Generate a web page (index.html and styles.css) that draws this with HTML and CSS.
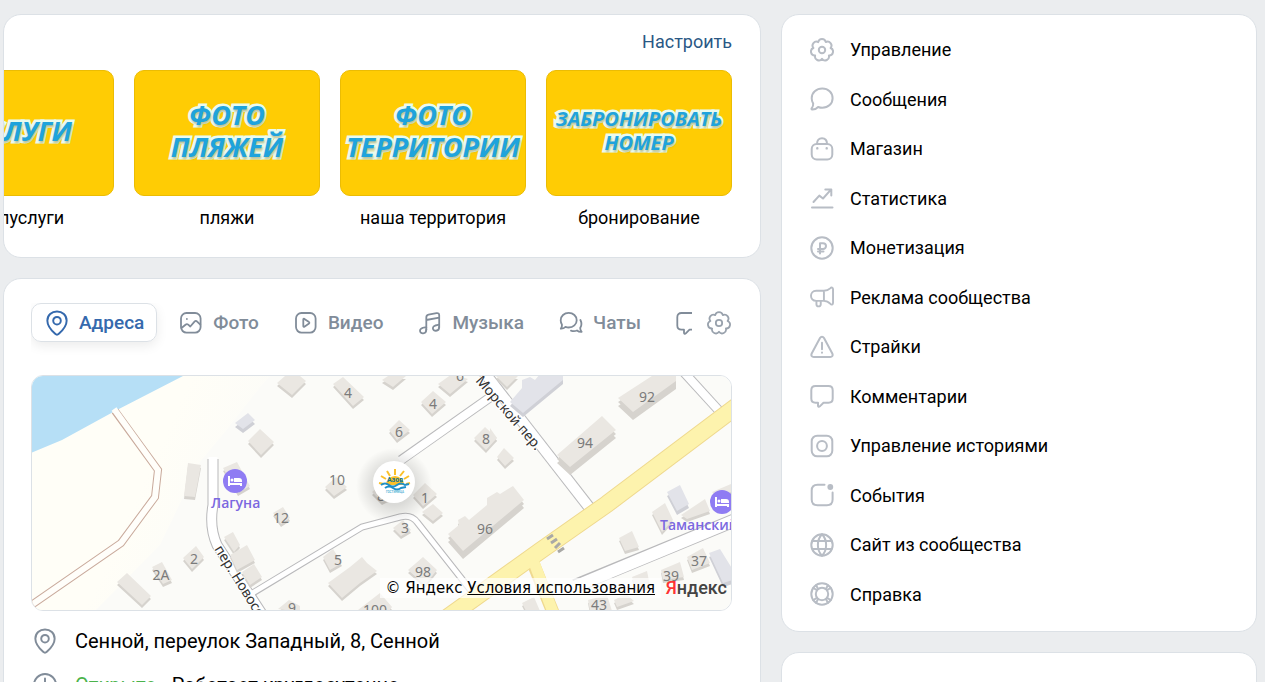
FILE: index.html
```html
<!DOCTYPE html>
<html lang="ru">
<head>
  <meta charset="UTF-8" />
  <title>Сообщество</title>
  <link rel="stylesheet" href="styles.css">
</head>
<body>

<!-- icons -->
<svg class="sprite" aria-hidden="true">
  <symbol id="gear" viewBox="0 0 24 24"><path d="M15.8 4.1A3.9 3.9 0 0 1 20.6 10A3.9 3.9 0 0 1 18.9 17.5A3.9 3.9 0 0 1 12 20.8A3.9 3.9 0 0 1 5.1 17.5A3.9 3.9 0 0 1 3.4 10A3.9 3.9 0 0 1 8.2 4.1A3.9 3.9 0 0 1 15.8 4.1Z"/><circle cx="12" cy="12" r="3.2"/></symbol>
  <symbol id="message" viewBox="0 0 24 24"><path d="M12.3 1.6C18.2 1.6 22.6 5.7 22.6 11.2S18.2 20.8 12.3 20.8C10.8 20.8 9.4 20.5 8.1 20C6.5 21.8 4 22.6 2 22.5C1.4 22.4 1.3 21.7 1.7 21.3C2.8 20 3.3 18.3 3.2 16.6C2.2 15 1.7 13.2 1.7 11.2C1.7 5.7 6.4 1.6 12.3 1.6Z"/></symbol>
  <symbol id="shop" viewBox="0 0 24 24"><rect x="1.7" y="7" width="20.6" height="15.5" rx="5"/><path d="M7 7C7 3 9 1.3 12 1.3S17 3 17 7"/><path d="M7.3 11.3v.1M16.7 11.3v.1" stroke-width="2.4"/></symbol>
  <symbol id="stats" viewBox="0 0 24 24"><path d="M2 21.5H22.5M3.5 16L9.3 9.6L13 12.5L20.5 4.2M15.3 3.5H21.3V9.5"/></symbol>
  <symbol id="ruble" viewBox="0 0 24 24"><circle cx="12" cy="12" r="10.7"/><path d="M10 17.5V7.2H13C17 7.2 17 13 13 13H8M8 15.5H13.5"/></symbol>
  <symbol id="ads" viewBox="0 0 25 24"><path d="M14.5 5.5H6.5C-.8 5.5-.8 16 6.5 16H14.5ZM14.5 5.5C17.5 5.5 19.5 4.5 21 3C22.5 1.4 24 2.2 24 4V18C24 20 22.5 20.7 21 19C19.5 17.3 17.5 16 14.5 16M6.7 16V19.5C6.7 22.5 11.2 22.5 11.2 19.5V16"/></symbol>
  <symbol id="warn" viewBox="0 0 24 24"><path d="M10 3C11 1.4 13 1.4 14 3L22.3 18.5C23.2 20.5 22.2 22 20.2 22H3.8C1.8 22 .8 20.5 1.7 18.5ZM12 7.8V14.3M12 17.6V17.7"/></symbol>
  <symbol id="comment" viewBox="0 0 24 24"><path d="M5.5 2H18.5C21.2 2 22.7 3.5 22.7 6.2V14.5C22.7 17.3 21.2 18.7 18.5 18.7H13.5L9.8 22.4C9 23.2 8 22.9 8 21.8V18.7H5.5C2.8 18.7 1.3 17.3 1.3 14.5V6.2C1.3 3.5 2.8 2 5.5 2Z"/></symbol>
  <symbol id="story" viewBox="0 0 24 24"><rect x="1.7" y="1.7" width="20.6" height="20.6" rx="5.5"/><circle cx="12" cy="12" r="4.9"/></symbol>
  <symbol id="event" viewBox="0 0 24 24"><path d="M14.5 1.7H7.5C3.5 1.7 1.7 3.5 1.7 7.5V16.5C1.7 20.5 3.5 22.3 7.5 22.3H16.8C20.8 22.3 22.6 20.5 22.6 16.5V9.5"/><circle cx="20.3" cy="4" r="2.9" fill="currentColor" stroke="none"/></symbol>
  <symbol id="globe" viewBox="0 0 24 24"><circle cx="12" cy="12" r="10.7"/><path d="M12 1.3C6.5 7 6.5 17 12 22.7M12 1.3C17.5 7 17.5 17 12 22.7M2.5 8H21.5M2.5 16H21.5"/></symbol>
  <symbol id="help" viewBox="0 0 24 24"><circle cx="12" cy="12" r="10.7"/><circle cx="12" cy="12" r="6.2"/><path d="M3.300 6L7 8.200M6 3.300L8.200 7M20.700 6L17 8.200M18 3.300L15.800 7M3.300 18L7 15.800M6 20.700L8.200 17M20.700 18L17 15.800M18 20.700L15.800 17"/></symbol>
  <symbol id="pin" viewBox="0 0 24 24"><path d="M12 1.3C17 1.3 20.9 5 20.9 9.9C20.9 14.5 17 19 13.7 22C12.7 22.9 11.3 22.9 10.3 22C7 19 3.1 14.5 3.1 9.9C3.1 5 7 1.3 12 1.3Z"/><circle cx="12" cy="9.9" r="3.5"/></symbol>
  <symbol id="photo" viewBox="0 0 24 24"><rect x="2" y="2" width="19.600" height="19.600" rx="5.500"/><path d="M2.500 17L6.500 13.700C7.500 12.900 8.300 12.900 9.200 13.700L11.300 15.500L15.500 10.700C16.400 9.700 17.300 9.700 18.200 10.700L21.300 13.700M7.900 7.900V8"/></symbol>
  <symbol id="video" viewBox="0 0 24 24"><rect x="2" y="2" width="19.600" height="19.600" rx="5.500"/><path d="M9.300 8.600C9.300 7.900 9.800 7.600 10.400 7.900L15 11.100C15.500 11.500 15.500 12.100 15 12.500L10.400 15.700C9.800 16.100 9.300 15.800 9.300 15.100Z"/></symbol>
  <symbol id="music" viewBox="0 0 24 24"><path d="M8.3 18.8V6.5C8.3 4.8 9 4 10.500 3.7L18.500 2.2C20.3 1.9 21.2 2.5 21.2 4.2V16.2M8.3 9L21.2 6.6"/><path d="M8.3 18.5C8.3 23.5 2 23.3 2 19.8C2 16.8 5 16.8 8.3 16.3M21.2 15.9C21.2 20.9 14.9 20.7 14.9 17.2C14.9 14.2 18 14.2 21.2 13.7"/></symbol>
  <symbol id="chats" viewBox="0 0 24 24"><path d="M9.700 1.900C14.200 1.900 17.700 5 17.700 9.200S14.200 16.500 9.700 16.500C8.500 16.500 7.500 16.300 6.500 15.900C5.300 17.100 3.500 17.800 1.800 17.700C2.700 16.500 3.100 15.200 3 13.700C2.100 12.400 1.700 10.900 1.700 9.200C1.700 5 5.200 1.900 9.700 1.900Z"/><path d="M21.400 9C22.700 11.500 22.600 14.700 21.200 17C21.200 18.500 21.700 19.700 22.600 20.900C20.900 21 19.200 20.500 18 19.500C16 20.400 13.500 20.200 12 19.600"/></symbol>
  <symbol id="clock" viewBox="0 0 24 24"><circle cx="12" cy="12" r="10.2"/><path d="M12 6V12.500L16 15"/></symbol>
</svg>

<div class="page">
  <main class="column">
    <section class="card menu">
      <div class="menu-head"><a href="#">Настроить</a></div>
      <div class="tiles">
        <a href="#" class="tile"><span class="cover">УСЛУГИ</span>допуслуги</a>
        <a href="#" class="tile"><span class="cover">ФОТО<br>ПЛЯЖЕЙ</span>пляжи</a>
        <a href="#" class="tile"><span class="cover">ФОТО<br>ТЕРРИТОРИИ</span>наша территория</a>
        <a href="#" class="tile"><span class="cover small">ЗАБРОНИРОВАТЬ<br>НОМЕР</span>бронирование</a>
      </div>
    </section>

    <section class="card content">
      <div class="tabs">
        <div class="tab-list">
          <button class="tab active"><svg class="icon"><use href="#pin"/></svg>Адреса</button>
          <button class="tab"><svg class="icon"><use href="#photo"/></svg>Фото</button>
          <button class="tab"><svg class="icon"><use href="#video"/></svg>Видео</button>
          <button class="tab"><svg class="icon"><use href="#music"/></svg>Музыка</button>
          <button class="tab"><svg class="icon"><use href="#chats"/></svg>Чаты</button>
          <button class="tab" aria-label="Обсуждения"><svg class="icon"><use href="#comment"/></svg></button>
        </div>
        <button class="settings" aria-label="Настройки"><svg class="icon"><use href="#gear"/></svg></button>
      </div>

      <div class="map">
        <svg class="map-view" viewBox="32 376 699 234" preserveAspectRatio="xMidYMid slice">
          <defs>
            <g id="houses">
              <path d="M277 383L285 376H300L306 381L292 395ZM333 384L343 377L364 397L353 406ZM382 380L388 376H406L393 387ZM438 384L452 374L468 379L450 394ZM421 402L433 391L446 402L432 414ZM389 430L399 420L410 430L397 440ZM474 438L485 427L497 438L486 450ZM248 441L260 429L274 442L261 455ZM188 463L201 465L195 497L184 496ZM223 468L237 462L250 486L238 493Z"/>
              <path d="M117 582L127 573L151 596L142 605ZM152 567L162 562L172 580L163 584ZM183 558L196 546L204 557L192 569ZM224 537L233 532L240 545L234 552ZM230 555L247 545L255 560L237 570ZM242 572L254 564L262 577L250 585ZM325 487L336 477L347 487L334 496ZM273 513L283 507L290 518L281 524ZM323 557L333 549L342 563L330 570ZM328 583L350 567L362 557L367 563L377 571L360 583L342 598Z"/>
              <path d="M393 528L403 520L411 530L401 536ZM408 570L423 557L437 570L425 585ZM358 610L380 593L392 607L388 612ZM278 609L289 600L300 606V612ZM372 492L380 485L390 498L382 502ZM413 495L425 483L437 494L423 506ZM422 512L433 504L443 513L433 521ZM497 457L504 448L514 458L505 466ZM495 375L518 376L507 387ZM490 428L497 438L490 443Z"/>
              <path d="M652 512L665 503L673 520L662 532ZM681 515L705 499L710 511L687 519ZM619 538L632 531L639 547L625 551ZM687 557L703 548L710 563L692 570ZM661 570L680 562L684 577L663 580ZM632 577L647 571L650 586L636 590ZM588 600L607 595L612 611H590ZM522 603L534 597L540 611H526ZM614 600L626 594L634 601L617 607ZM712 492L731 484V492L718 498Z"/>
            </g>
            <g id="blocks">
              <path d="M448 534L459 525L458 520L465 516L469 520L487 505V498L497 492L500 494L513 486L524 500L463 551ZM618 398L655 374H676V381L633 412ZM557 455L602 416L616 430L570 467Z"/>
            </g>
            <g id="offices">
              <path d="M235 423L248 413L255 420L243 429ZM510 402L522 388V380L530 377L535 380L540 374H563V380L523 413ZM667 492L680 485L689 504L677 511ZM709 553L720 549L733 570V580L723 583Z"/>
            </g>
            <g id="bed">
              <circle r="12" fill="#8f7cf3"/>
              <path d="M-7-5H-5V2H7V5H5V4H-5V5H-7ZM-1-3H4Q7-3 7 0V1H-1Z" fill="#fff"/><circle cx="-3" cy="-1" r="1.5" fill="#fff"/>
            </g>
            <radialGradient id="shade"><stop offset=".5" stop-opacity=".13"/><stop offset="1" stop-opacity="0"/></radialGradient>
            <linearGradient id="beach" x1="0" y1="0" x2="1" y2=".4"><stop offset=".6" stop-color="#fffef7"/><stop offset="1" stop-color="#fbfbf8"/></linearGradient>
          </defs>

          <rect x="0" y="360" width="760" height="270" fill="#fbfbf8"/>
          <path d="M0 360H285L262 385L225 432L200 462L160 545L95 611H0Z" fill="url(#beach)"/>
          <path d="M0 376H183L115 411L62 440L31 453L0 462Z" fill="#b6dff6"/>

          <!-- roads -->
          <g class="road sand"><path d="M115 411L158 470L155 497L121 543L20 613"/></g>
          <g class="road-fill sand"><path d="M114 409L158 470L155 497L121 543L20 613"/></g>
          <g class="road">
            <path d="M213 459L213 505Q209 527 217 545L266 620" stroke-width="11"/>
            <path d="M248 596L362 527L400 517Q411 514 417 522L480 602" stroke-width="7"/>
            <path d="M401 460L492 396" stroke-width="10"/>
            <path d="M480 367L592 511" stroke-width="12"/>
            <path d="M680 368L722 414" stroke-width="10"/>
            <path d="M575 586L740 518" stroke-width="14"/>
          </g>
          <g class="road-fill">
            <path d="M213 457L213 505Q209 527 217 545L266 620" stroke-width="9"/>
            <path d="M246 597L362 527L400 517Q411 514 417 522L480 602" stroke-width="5"/>
            <path d="M400 461L492 396" stroke-width="8"/>
            <path d="M480 367L592 511" stroke-width="10"/>
            <path d="M680 368L722 414" stroke-width="8"/>
            <path d="M574 587L740 518" stroke-width="12"/>
          </g>
          <g fill="none" stroke="#efd98f"><path d="M745 400L607 504L540 551L430 630" stroke-width="18"/><path d="M533 563L556 620" stroke-width="13"/></g>
          <g fill="none" stroke="#fdf3ad"><path d="M745 400L607 504L540 551L430 630" stroke-width="16"/><path d="M533 560L556 620" stroke-width="11"/></g>
          <path d="M547 539L553 535M551 543L557 539M555 548L560 543M558 552L564 548" stroke="#a9a9a6" stroke-width="3"/>

          <use href="#houses" y="3" fill="#d6d3ce"/>
          <use href="#houses" fill="#eae7e2"/>
          <use href="#blocks" y="8" fill="#d6d3ce"/>
          <use href="#blocks" y="4" fill="#d6d3ce"/>
          <use href="#blocks" fill="#eae7e2"/>
          <use href="#offices" y="4" fill="#cfd0d6"/>
          <use href="#offices" fill="#e2e3e9"/>

          <g class="numbers">
            <text x="348" y="398">4</text><text x="433" y="409">4</text><text x="399" y="437">6</text><text x="460" y="381">6</text>
            <text x="486" y="444">8</text><text x="337" y="485">10</text><text x="281" y="523">12</text><text x="381" y="501">8</text>
            <text x="425" y="503">1</text><text x="405" y="533">3</text><text x="338" y="565">5</text><text x="485" y="534">96</text>
            <text x="423" y="577">98</text><text x="375" y="615">100</text><text x="292" y="613">9</text><text x="194" y="564">2</text>
            <text x="161" y="580">2А</text><text x="647" y="402">92</text><text x="585" y="448">94</text><text x="699" y="566">37</text>
            <text x="671" y="581">39</text><text x="599" y="610">43</text>
          </g>
          <g class="streets">
            <text transform="translate(475 381) rotate(49)">Морской пер.</text>
            <text transform="translate(214 549) rotate(58)">пер. Новоселов</text>
          </g>
          <g class="hotels">
            <use href="#bed" x="235" y="481"/><text x="211" y="508">Лагуна</text>
            <use href="#bed" x="722" y="502"/><text x="660" y="530">Таманский</text>
          </g>

          <!-- marker of the community -->
          <circle cx="394" cy="486" r="38" fill="url(#shade)"/>
          <circle cx="394" cy="482" r="21" fill="#fff"/>
          <path d="M395 475V469M390 476L387 471M400 476L404 471M386 479L381 476M404 479L409 476M384 484L379 483M406 484L410 483" stroke="#fbc02a" stroke-width="2"/>
          <path d="M386 485A9 9 0 0 1 404 485Z" fill="#fbc02a"/>
          <path d="M381 485Q385 482 389 485T397 485T405 485L409 484M385 488Q389 485 393 488T401 488L406 487" fill="none" stroke="#1d8fc9" stroke-width="2"/>
          <text class="brand" x="395" y="482">Азов</text>
          <text class="brand sub" x="395" y="493">ГОСТИНИЦА</text>
        </svg>
        <div class="map-copy">© Яндекс <a href="#">Условия использования</a></div>
        <a href="#" class="map-logo"><span>Я</span>ндекс</a>
      </div>

      <div class="info"><svg class="icon"><use href="#pin"/></svg>Сенной, переулок Западный, 8, Сенной</div>
      <div class="info"><svg class="icon"><use href="#clock"/></svg><div><span class="open">Открыто</span> · Работает круглосуточно</div></div>
    </section>
  </main>

  <aside class="column">
    <nav class="card">
      <ul class="nav">
        <li><a href="#"><svg class="icon"><use href="#gear"/></svg>Управление</a></li>
        <li><a href="#"><svg class="icon"><use href="#message"/></svg>Сообщения</a></li>
        <li><a href="#"><svg class="icon"><use href="#shop"/></svg>Магазин</a></li>
        <li><a href="#"><svg class="icon"><use href="#stats"/></svg>Статистика</a></li>
        <li><a href="#"><svg class="icon"><use href="#ruble"/></svg>Монетизация</a></li>
        <li><a href="#"><svg class="icon"><use href="#ads"/></svg>Реклама сообщества</a></li>
        <li><a href="#"><svg class="icon"><use href="#warn"/></svg>Страйки</a></li>
        <li><a href="#"><svg class="icon"><use href="#comment"/></svg>Комментарии</a></li>
        <li><a href="#"><svg class="icon"><use href="#story"/></svg>Управление историями</a></li>
        <li><a href="#"><svg class="icon"><use href="#event"/></svg>События</a></li>
        <li><a href="#"><svg class="icon"><use href="#globe"/></svg>Сайт из сообщества</a></li>
        <li><a href="#"><svg class="icon"><use href="#help"/></svg>Справка</a></li>
      </ul>
    </nav>
    <section class="card next"></section>
  </aside>
</div>

</body>
</html>
```
FILE: styles.css
```css
* {
    box-sizing: border-box;
}

body {
    margin: 0;
    height: 100vh;
    overflow: hidden;
    background-color: #ebedef;
    font-family: Roboto, "Liberation Sans", sans-serif;
    font-size: 18px;
    color: #000;
}

a {
    color: inherit;
    text-decoration: none;
}

button {
    font: inherit;
    border: none;
    background: none;
    padding: 0;
    cursor: pointer;
}

.sprite {
    display: none;
}

.icon {
    flex: none;
    width: 26px;
    height: 26px;
    fill: none;
    stroke: currentColor;
    stroke-width: 1.8;
    stroke-linecap: round;
    stroke-linejoin: round;
    overflow: visible;
}

.page {
    display: grid;
    grid-template-columns: minmax(0, 758fr) minmax(0, 476fr);
    align-items: start;
    gap: 20px;
    padding: 14px 8px 0 3px;
}

.column {
    display: flex;
    flex-direction: column;
    gap: 20px;
}

.card {
    background-color: #fff;
    border: 1px solid #dce1e6;
    border-radius: 18px;
    overflow: hidden;
}

/* menu tiles */
.menu {
    padding: 16px 28px 27px;
}

.menu-head {
    line-height: 22px;
    margin-bottom: 17px;
    text-align: right;
    color: #2a5885;
}

.tiles {
    display: flex;
    justify-content: flex-end;
    gap: 20px;
}

.tile {
    flex: 0 0 186px;
    text-align: center;
    line-height: 24px;
}

.cover {
    display: flex;
    align-items: center;
    justify-content: center;
    height: 126px;
    margin-bottom: 10px;
    padding-bottom: 4px;
    border: 1px solid #ebbc04;
    border-radius: 10px;
    background-color: #ffcc04;
    font-family: "Open Sans", sans-serif;
    font-size: 27px;
    font-weight: 700;
    font-style: italic;
    line-height: 32px;
    color: #1fa3dc;
    -webkit-text-stroke: 5px #e9fbef;
    paint-order: stroke fill;
    text-shadow: 1px 2px 2px rgba(120, 110, 20, 0.4);
}

.cover.small {
    font-size: 20px;
    line-height: 24px;
}

/* tabs */
.content {
    padding: 24px 28px 24px 27px;
}

.tabs {
    display: flex;
    gap: 14px;
    margin-bottom: 8px;
}

.tab-list {
    display: flex;
    flex: 1;
    gap: 8px;
    min-width: 0;
    overflow: hidden;
    padding-bottom: 25px;
}

.tab {
    display: flex;
    align-items: center;
    flex: none;
    gap: 9px;
    height: 39px;
    padding: 0 12px;
    border: 1px solid transparent;
    border-radius: 10px;
    font-size: 19px;
    font-weight: 500;
    color: #818c99;
}

.tab .icon {
    width: 24px;
    height: 24px;
    margin: 0 1px;
}

.tab.active {
    border-color: #dce1e6;
    box-shadow: 0 4px 12px rgba(0, 0, 0, 0.08);
    color: #3569ad;
}

.tab.active .icon {
    width: 26px;
    height: 26px;
    margin: 0;
}

.settings {
    height: 39px;
    padding: 0 1px;
    color: #99a2ad;
}

.settings .icon {
    display: block;
    width: 24px;
    height: 24px;
}

/* map */
.map {
    position: relative;
    height: 236px;
    border: 1px solid #dce1e6;
    border-radius: 12px;
    overflow: hidden;
    margin-bottom: 8px;
}

.map-view {
    display: block;
    width: 100%;
    height: 100%;
}

.road {
    fill: none;
    stroke: #b9b9bb;
}

.road-fill {
    fill: none;
    stroke: #fff;
}

.road.sand {
    stroke: #c9aa9c;
    stroke-width: 8;
}

.road-fill.sand {
    stroke: #fffefa;
    stroke-width: 6;
}

.numbers {
    font: 14px "Noto Sans", sans-serif;
    text-anchor: middle;
    fill: #7b7b7b;
}

.streets {
    font: 14px "Noto Sans", sans-serif;
    fill: #333;
    stroke: #fff;
    stroke-width: 2;
    paint-order: stroke;
}

.hotels {
    font: 600 14px "Open Sans", sans-serif;
    fill: #7b68e0;
}

.brand {
    font: bold 7px Roboto, sans-serif;
    text-anchor: middle;
    fill: #12758f;
}

.brand.sub {
    font-size: 3px;
    fill: #5cb4d8;
}

.map-copy {
    position: absolute;
    right: 70px;
    bottom: 12px;
    padding: 0 6px;
    background-color: rgba(255, 255, 255, 0.7);
    font: 15px/20px "DejaVu Sans", sans-serif;
}

.map-copy a {
    text-decoration: underline;
}

.map-logo {
    position: absolute;
    right: 4px;
    bottom: 12px;
    font-size: 18px;
    line-height: 20px;
    font-weight: 500;
    color: #444;
}

.map-logo span {
    color: #f33;
}

.info {
    display: flex;
    align-items: center;
    gap: 17px;
    padding-left: 1px;
    font-size: 20px;
    line-height: 44px;
}

.info .icon {
    color: #818c99;
}

.open {
    color: #4bb34b;
}

/* right column */
.nav {
    display: grid;
    grid-auto-rows: 1fr;
    min-height: 594px;
    margin: 0;
    padding: 10px 0 12px;
    box-sizing: content-box;
    list-style: none;
}

.nav a {
    display: flex;
    align-items: center;
    gap: 16px;
    height: 100%;
    padding: 0 28px;
}

.nav .icon {
    width: 24px;
    height: 24px;
    stroke-width: 2;
    color: #b8bdc5;
}

.next {
    height: 200px;
}
```
